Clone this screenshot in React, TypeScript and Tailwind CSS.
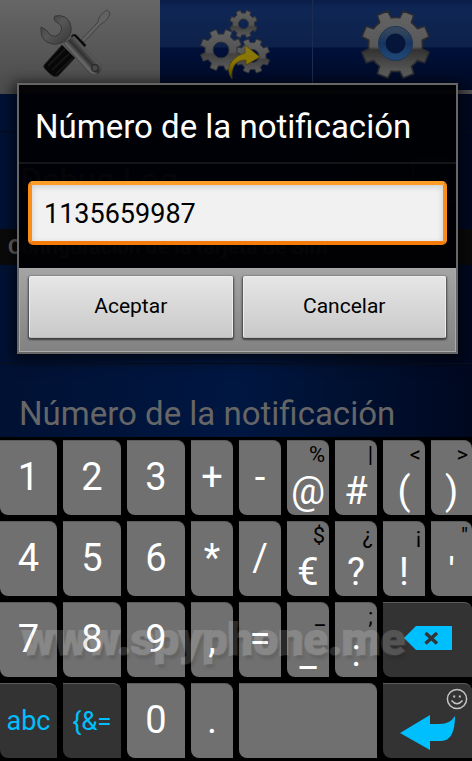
import React from 'react';

function gearPath(cx: number, cy: number, outer: number, inner: number, hole: number, teeth: number, offset: number) {
  const step = (Math.PI * 2) / teeth;
  const at = (r: number, a: number) => `${(cx + r * Math.cos(a)).toFixed(2)} ${(cy + r * Math.sin(a)).toFixed(2)}`;
  let d = '';
  for (let i = 0; i < teeth; i++) {
    const a = i * step + offset;
    d += `${i === 0 ? 'M' : 'L'}${at(inner, a - step * 0.3)} L${at(outer, a - step * 0.21)} L${at(outer, a + step * 0.21)} L${at(inner, a + step * 0.3)} `;
    d += `A${inner} ${inner} 0 0 1 ${at(inner, a + step * 0.7)} `;
  }
  d += `Z M${cx + hole} ${cy} A${hole} ${hole} 0 1 0 ${cx - hole} ${cy} A${hole} ${hole} 0 1 0 ${cx + hole} ${cy} Z`;
  return d;
}

function ToolsIcon() {
  return (
    <svg viewBox="35 5 80 78" className="h-[78px] w-20" aria-hidden="true">
      <defs>
        <linearGradient id="steel" x1="0" y1="0" x2="1" y2="1">
          <stop offset="0" stopColor="#373737" />
          <stop offset="0.45" stopColor="#575757" />
          <stop offset="1" stopColor="#353535" />
        </linearGradient>
        <linearGradient id="shaft" gradientUnits="userSpaceOnUse" x1="75" y1="61" x2="87" y2="50">
          <stop offset="0" stopColor="#333" />
          <stop offset="0.3" stopColor="#6a6a6a" />
          <stop offset="0.6" stopColor="#303030" />
          <stop offset="1" stopColor="#606060" />
        </linearGradient>
      </defs>
      <path d="M81 40 L98 22 Q98 16 107 10 L110 13 Q108 21 101 24 L84 42Z" fill="#626262" stroke="#424242" strokeWidth="1" />
      <path d="M44 65 L62 45 L75 58 L58 76 Q54 78 50 74 L45 69 Q43 67 44 65Z" fill="#080808" stroke="#292929" strokeWidth="1" />
      <path d="M48 66 L65 49 M52 70 L69 54 M56 74 L73 58" stroke="#1a1a1a" strokeWidth="1.4" />
      <path d="M72 35 Q76 33 79 38 L86 45 L83 49 L71 39Z" fill="#080808" stroke="#202020" />
      <path d="M64 43 L74 36 L100 64 Q103 70 98 74 Q93 77 87 71Z" fill="url(#shaft)" stroke="#454545" strokeWidth="0.8" />
      <path d="M55 16 Q66 14 70 23 Q74 34 65 41 Q56 47 47 42 Q40 38 41 27 Q47 29 50 35 Q56 38 60 33 Q64 27 58 23 Q52 20 55 16Z" fill="url(#steel)" stroke="#363636" strokeWidth="1" />
      <circle cx="95" cy="68" r="3.3" fill="#4a4a4a" stroke="#2b2b2b" strokeWidth="1.3" />
    </svg>
  );
}

function GearsIcon() {
  return (
    <svg viewBox="192 0 90 84" className="h-[84px] w-[90px]" aria-hidden="true">
      <defs>
        <linearGradient id="gear" x1="0" y1="0" x2="0" y2="1">
          <stop offset="0" stopColor="#626262" />
          <stop offset="0.55" stopColor="#525252" />
          <stop offset="0.6" stopColor="#414141" />
          <stop offset="1" stopColor="#5e5e5e" />
        </linearGradient>
        <linearGradient id="arrow" x1="0" y1="0" x2="0" y2="1">
          <stop offset="0" stopColor="#857817" />
          <stop offset="0.5" stopColor="#8b7500" />
          <stop offset="1" stopColor="#584900" />
        </linearGradient>
      </defs>
      <g fill="url(#gear)" fillRule="evenodd" stroke="#303238" strokeWidth="1" strokeLinejoin="round">
        <path d={gearPath(244.5, 24, 14, 11, 5, 8, 0.39)} />
        <path d={gearPath(253.5, 56, 17.5, 13.5, 6.5, 8, 0.39)} />
        <path d={gearPath(222, 50, 21, 16, 8, 8, 0.39)} />
      </g>
      <path d="M233 79 Q226 70 233 61 Q238 55 246 53 L246 45 L261 57 L247 65 L247 60 Q238 60 235 66 Q232 71 233 79Z" fill="url(#arrow)" stroke="#4a4212" strokeWidth="0.8" />
    </svg>
  );
}

function SettingsIcon() {
  return (
    <svg viewBox="359 8 73 73" className="h-[73px] w-[73px]" aria-hidden="true">
      <defs>
        <linearGradient id="biggear" x1="0" y1="0" x2="0" y2="1">
          <stop offset="0" stopColor="#646464" />
          <stop offset="0.53" stopColor="#585858" />
          <stop offset="0.58" stopColor="#323232" />
          <stop offset="1" stopColor="#646464" />
        </linearGradient>
        <linearGradient id="ring" x1="0" y1="0" x2="0" y2="1">
          <stop offset="0" stopColor="#35465c" />
          <stop offset="0.5" stopColor="#17345f" />
          <stop offset="1" stopColor="#1f4674" />
        </linearGradient>
      </defs>
      <path d={gearPath(395.5, 44.5, 34.5, 27, 13, 8, Math.PI / 8)} fill="url(#biggear)" fillRule="evenodd" stroke="#292b30" strokeWidth="1.6" strokeLinejoin="round" />
      <circle cx="395.5" cy="43.5" r="13.5" fill="#06163a" stroke="url(#ring)" strokeWidth="7" />
      <circle cx="395.5" cy="43.5" r="17" fill="none" stroke="#1c3556" strokeWidth="1" />
    </svg>
  );
}

function BackspaceIcon() {
  return (
    <svg viewBox="0 0 48 26" className="h-[26px] w-12" aria-hidden="true">
      <path d="M0 13 L12 1 H48 V25 H12Z" fill="#00bfff" />
      <path d="M21.5 8 L33 18.5 M33 8 L21.5 18.5" stroke="#333" strokeWidth="3.4" />
    </svg>
  );
}

function EnterIcon() {
  return (
    <svg viewBox="0 0 56 36" className="h-9 w-14" aria-hidden="true">
      <path d="M0 18 L30 0 V9 H40 Q50 9 55 1 Q55 26 41 26 H30 V35Z" fill="#00bfff" />
    </svg>
  );
}

function SmileyIcon() {
  return (
    <svg viewBox="0 0 22 22" className="h-[22px] w-[22px]" fill="none" stroke="#c4c4c4" strokeWidth="1.5" aria-hidden="true">
      <circle cx="11" cy="11" r="9.6" />
      <path d="M5.5 12.5 Q11 19 16.5 12.5" />
      <path d="M8.2 7.5v2M13.8 7.5v2" strokeWidth="2" />
    </svg>
  );
}

type KeyDef = { main: string; hint?: string };

const keyRows: KeyDef[][] = [
  [
    { main: '1' }, { main: '2' }, { main: '3' }, { main: '+' }, { main: '-' },
    { main: '@', hint: '%' }, { main: '#', hint: '|' }, { main: '(', hint: '<' }, { main: ')', hint: '>' },
  ],
  [
    { main: '4' }, { main: '5' }, { main: '6' }, { main: '*' }, { main: '/' },
    { main: '€', hint: '$' }, { main: '?', hint: '¿' }, { main: '!', hint: '¡' }, { main: "'", hint: '"' },
  ],
  [
    { main: '7' }, { main: '8' }, { main: '9' }, { main: ',' }, { main: '=' },
    { main: '_', hint: '_' }, { main: ':', hint: ';' },
  ],
];

const keyShape = 'relative flex h-[75px] items-center justify-center rounded-tr-lg rounded-bl-lg border-t border-[#5c5c5c]';

function Key({ main, hint }: KeyDef) {
  return (
    <button type="button" className={`${keyShape} bg-[#707070] pb-0.5 text-[38px] leading-none text-white`}>
      {hint && <span className="absolute top-0.5 right-1 text-[22px] leading-6 text-black">{hint}</span>}
      <span className={hint ? 'pt-7' : ''}>{main}</span>
    </button>
  );
}

function Keyboard() {
  return (
    <section aria-label="Teclado" className="relative bg-black py-[3px]">
      <div className="grid grid-cols-[57fr_58fr_58fr_42fr_42fr_42fr_42fr_42fr_41fr] gap-1.5">
        {keyRows.flat().map((key) => (
          <Key key={key.main} {...key} />
        ))}
        <button type="button" aria-label="Borrar" className={`${keyShape} col-span-2 bg-[#333] pb-1`}>
          <BackspaceIcon />
        </button>
        <button type="button" className={`${keyShape} bg-[#333] text-[27px] text-[#00bfff]`}>abc</button>
        <button type="button" className={`${keyShape} bg-[#333] text-[26px] text-[#00bfff]`}>{'{&='}</button>
        <Key main="0" />
        <Key main="." />
        <button type="button" aria-label="Espacio" className={`${keyShape} col-span-3 bg-[#707070]`} />
        <button type="button" aria-label="Intro" className={`${keyShape} col-span-2 bg-[#333]`}>
          <span className="absolute top-1 right-1"><SmileyIcon /></span>
          <span className="pt-6"><EnterIcon /></span>
        </button>
      </div>
      <p className="pointer-events-none absolute top-[171px] left-[22px] text-[45px] leading-[64px] font-black whitespace-nowrap text-white opacity-16 [-webkit-text-stroke:2px_white] [paint-order:stroke_fill] [text-shadow:2px_4px_3px_rgba(0,0,0,0.7)]">
        www.spyphone.me
      </p>
    </section>
  );
}

function Tabs() {
  const blueTab = 'flex justify-center border-b-4 border-[#4c4c4c] bg-[linear-gradient(#0a1d49_0px,#0f2655_8px,#0d2149_47px,#00103a_48px,#000a25_90px)]';
  return (
    <nav className="grid h-[94px] grid-cols-[160fr_153fr_159fr]">
      <button type="button" aria-label="Herramientas" className="flex items-start justify-center bg-linear-to-b from-[#666] to-[#4b4b4b] pt-[5px] pr-2.5">
        <ToolsIcon />
      </button>
      <button type="button" aria-label="Acciones" className={`${blueTab} items-start border-r border-r-[#1c2c50]`}>
        <GearsIcon />
      </button>
      <button type="button" aria-label="Ajustes" className={`${blueTab} items-start pt-2 pl-1.5`}>
        <SettingsIcon />
      </button>
    </nav>
  );
}

function PreferenceList() {
  return (
    <div className="text-[#666]">
      <div className="h-[38px] border-b border-[#070c1a]" />
      <label className="flex h-[97px] items-center justify-between pr-4 pl-5 text-[33px]">
        Debug Log
        <input type="checkbox" defaultChecked className="h-11 w-11 appearance-none rounded border-2 border-[#444]" />
      </label>
      <h2 className="h-9 bg-[#0a0a0a] pl-2 text-[21px] leading-9 font-bold">Configuración de la tarjeta de Sim</h2>
      <div className="h-[99px] border-b border-[#0a0f1c]" />
      <p className="truncate pt-7 pr-5 pl-[19px] text-[33px] leading-[44px]">Número de la notificación</p>
    </div>
  );
}

function NumberDialog() {
  const action = 'h-[62px] flex-1 rounded-xs border border-[#ededed] border-b-[#bbb] bg-linear-to-b from-[#e6e6e6] to-[#c9c9c9] text-[21px] text-black shadow-[0_1px_2px_1px_rgba(0,0,0,0.55)]';
  return (
    <form
      role="dialog"
      aria-labelledby="dialog-title"
      onSubmit={(event) => event.preventDefault()}
      className="w-full border-2 border-[#666] bg-[#000003]/95 shadow-[0_3px_12px_4px_rgba(0,0,0,0.6)]"
    >
      <h1 id="dialog-title" className="h-[79px] truncate border-b-2 border-[#151518] px-4 pt-5 text-[33px] leading-[44px] text-white">
        Número de la notificación
      </h1>
      <div className="px-[9px] pt-[17px] pb-[23px]">
        <input
          type="text"
          aria-labelledby="dialog-title"
          defaultValue="1135659987"
          className="h-16 w-full rounded-[5px] border-4 border-t-[#ff9d26] border-r-[#fa8c18] border-b-[#f57c0b] border-l-[#fa8c18] bg-[#f1f1f1] px-3 pt-0.5 text-[27px] text-black shadow-[inset_0_2px_6px_rgba(0,0,0,0.15)] outline-none"
        />
      </div>
      <div className="flex gap-2.5 border border-[#a9a9a9] bg-linear-to-b from-[#a4a4a4] to-[#828282] px-[9px] pt-[7px] pb-[13px]">
        <button type="submit" className={action}>Aceptar</button>
        <button type="button" className={action}>Cancelar</button>
      </div>
    </form>
  );
}

export default function App() {
  return (
    <div className="flex h-screen flex-col overflow-hidden bg-black font-['Roboto',sans-serif]">
      <main className="relative min-h-0 flex-1 overflow-hidden bg-[linear-gradient(90deg,#001133_0%,#001742_50%,#001030_75%,#000820_100%)]">
        <Tabs />
        <PreferenceList />
        <div className="absolute inset-0 flex items-center pr-[14px] pl-[17px]">
          <NumberDialog />
        </div>
      </main>
      <Keyboard />
    </div>
  );
}
